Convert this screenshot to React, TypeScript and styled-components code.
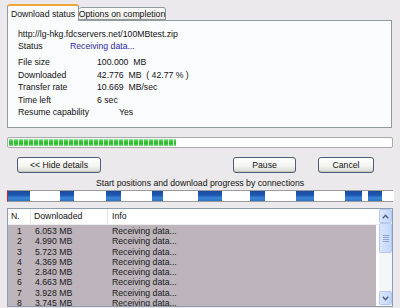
import React from 'react';
import styled, { createGlobalStyle } from 'styled-components';

const Global = createGlobalStyle`
  html, body { margin: 0; padding: 0; background: #ebe9eb; }
  body { font-family: "Liberation Sans", Arial, sans-serif; font-size: 8.7px; color: #111; }
  * { box-sizing: border-box; }
`;

const Window = styled.div`
  width: 400px;
  height: 308px;
  overflow: hidden;
  background: #ebe9eb;
  display: flex;
  flex-direction: column;
  padding: 4px 7px 1px 7px;
`;

const TabStrip = styled.div`
  display: flex;
  align-items: flex-end;
  height: 17px;
  margin-bottom: -1px;
  position: relative;
  z-index: 1;
`;

const Tab = styled.div<{ $active?: boolean }>`
  display: flex;
  align-items: center;
  justify-content: center;
  width: ${(p) => (p.$active ? 72 : 87)}px;
  height: ${(p) => (p.$active ? 17 : 13)}px;
  margin-bottom: ${(p) => (p.$active ? 0 : 1)}px;
  border: 1px solid #919b9c;
  border-bottom: ${(p) => (p.$active ? 'none' : '1px solid #919b9c')};
  border-left: ${(p) => (p.$active ? '1px solid #919b9c' : 'none')};
  border-top: ${(p) => (p.$active ? '2px solid #f0a73a' : '1px solid #919b9c')};
  border-radius: 3px 3px 0 0;
  background: ${(p) => (p.$active ? '#fbfcfe' : 'linear-gradient(#ffffff, #ecebe6)')};
  padding-top: ${(p) => (p.$active ? 0 : 1)}px;
  color: #111;
  white-space: nowrap;
`;

const Panel = styled.div`
  height: 108px;
  margin-right: 1px;
  border: 1px solid #919b9c;
  background: #fbfcfe;
  padding: 7px 10px 0 10px;
  display: flex;
  flex-direction: column;
`;

const UrlLine = styled.div`
  height: 12px;
  line-height: 12px;
`;

const InfoRow = styled.div<{ $gap?: number }>`
  display: grid;
  grid-template-columns: ${(p) => (p.$gap ? `${p.$gap}px` : '79px')} 1fr;
  height: 12.4px;
  line-height: 12px;
`;

const StatusValue = styled.span`
  color: #2b2ba0;
`;

const Spacer = styled.div<{ $h: number }>`
  height: ${(p) => p.$h}px;
  flex: none;
`;

const Progress = styled.div`
  margin-top: 9px;
  height: 11px;
  border: 1px solid #a9a9a9;
  border-radius: 2px;
  background: #fff;
  padding: 1px;
  display: flex;
`;

const ProgressFill = styled.div`
  height: 100%;
  background:
    repeating-linear-gradient(90deg, transparent 0 4px, rgba(255, 255, 255, 0.85) 4px 5px),
    linear-gradient(#9be69a, #37c438 35%, #2fbb2f 65%, #7edc7d);
`;

const ButtonRow = styled.div`
  margin-top: 9px;
  height: 16px;
  display: flex;
  padding-left: 10px;
`;

const Button = styled.div<{ $w: number; $ml?: number }>`
  width: ${(p) => p.$w}px;
  margin-left: ${(p) => p.$ml ?? 0}px;
  height: 16px;
  border: 1px solid #4f5d77;
  border-radius: 3px;
  background: linear-gradient(#ffffff, #f3f3ef 60%, #d8d8d0);
  box-shadow: inset 0 -1px 0 #c9c9c0;
  display: flex;
  align-items: center;
  justify-content: center;
  color: #111;
`;

const Caption = styled.div`
  margin-top: 5px;
  height: 10px;
  line-height: 10px;
  text-align: center;
`;

const ConnBar = styled.div`
  margin-top: 2px;
  height: 12px;
  border: 1px solid #9c9c9c;
  border-left: 1px solid #d42020;
  background: #fff;
  display: flex;
`;

const Seg = styled.div<{ $on: boolean }>`
  height: 100%;
  flex: none;
  background: ${(p) =>
    p.$on ? 'linear-gradient(#1b4a9c, #1d55b2 40%, #3b86d6 70%, #2f70c4)' : '#ffffff'};
`;

const Table = styled.div`
  margin-top: 6px;
  flex: 1;
  border: 1px solid #8c9cb3;
  background: #fff;
  display: flex;
  overflow: hidden;
`;

const List = styled.div`
  flex: 1;
  display: flex;
  flex-direction: column;
  padding-right: 3px;
`;

const cols = '23px 77px 1fr';

const Header = styled.div`
  display: grid;
  grid-template-columns: ${cols};
  height: 16px;
  background: #fff;
  border-bottom: 1px solid #eeeeee;
  margin-right: -3px;
`;

const HeadCell = styled.div<{ $last?: boolean }>`
  padding-left: ${(p) => (p.$last ? 4 : 3)}px;
  line-height: 15px;
  border-right: ${(p) => (p.$last ? 'none' : '1px solid #e4e4e4')};
  color: #111;
`;

const Rows = styled.div`
  flex: 1;
  background: #bdb5bb;
  padding-top: 1px;
`;

const Row = styled.div`
  display: grid;
  grid-template-columns: ${cols};
  height: 10.3px;
  line-height: 10.3px;
  color: #1a1a1a;
`;

const Cell = styled.div<{ $center?: boolean }>`
  padding-left: ${(p) => (p.$center ? 0 : 4)}px;
  text-align: ${(p) => (p.$center ? 'center' : 'left')};
  white-space: nowrap;
  overflow: hidden;
`;

const ScrollBar = styled.div`
  width: 13px;
  display: flex;
  flex-direction: column;
  background: #f5f6f8;
  padding-bottom: 1px;
`;

const ScrollBtn = styled.div`
  height: 14px;
  border: 1px solid #b5c8f0;
  border-radius: 2px;
  background: linear-gradient(90deg, #dce7fd, #c3d5fb);
  display: flex;
  align-items: center;
  justify-content: center;
`;

const Thumb = styled.div`
  height: 30px;
  border: 1px solid #b5c8f0;
  border-radius: 2px;
  background: linear-gradient(90deg, #dbe6fd, #c4d6fb);
  display: flex;
  flex-direction: column;
  align-items: center;
  justify-content: center;
  gap: 1px;
`;

const Grip = styled.div`
  width: 6px;
  height: 1px;
  background: #8ca6db;
`;

const Track = styled.div`
  flex: 1;
`;

const Chevron = ({ up }: { up?: boolean }) => (
  <svg width="7" height="5" viewBox="0 0 7 5">
    <path
      d={up ? 'M0.8 4.2 L3.5 1.3 L6.2 4.2' : 'M0.8 0.8 L3.5 3.7 L6.2 0.8'}
      fill="none"
      stroke="#4d6185"
      strokeWidth="1.5"
    />
  </svg>
);

const segments: [boolean, number][] = [
  [true, 22], [false, 30], [true, 14], [false, 32], [true, 15], [false, 31],
  [true, 11], [false, 35], [true, 24], [false, 28], [true, 15], [false, 31],
  [true, 18], [false, 31], [true, 17], [false, 6], [true, 14], [false, 12],
];

const rows = [
  ['1', '6.053  MB'],
  ['2', '4.990  MB'],
  ['3', '5.723  MB'],
  ['4', '4.369  MB'],
  ['5', '2.840  MB'],
  ['6', '4.663  MB'],
  ['7', '3.928  MB'],
  ['8', '3.745  MB'],
];

export default function App() {
  const progress = 0.436;
  return (
    <>
      <Global />
      <Window>
        <TabStrip>
          <Tab $active>Download status</Tab>
          <Tab>Options on completion</Tab>
        </TabStrip>
        <Panel>
          <UrlLine>http://lg-hkg.fdcservers.net/100MBtest.zip</UrlLine>
          <InfoRow $gap={52}>
            <span>Status</span>
            <StatusValue>Receiving data...</StatusValue>
          </InfoRow>
          <Spacer $h={4} />
          <InfoRow>
            <span>File size</span>
            <span>100.000&nbsp; MB</span>
          </InfoRow>
          <InfoRow>
            <span>Downloaded</span>
            <span>42.776&nbsp; MB&nbsp; ( 42.77 % )</span>
          </InfoRow>
          <InfoRow>
            <span>Transfer rate</span>
            <span>10.669&nbsp; MB/sec</span>
          </InfoRow>
          <InfoRow>
            <span>Time left</span>
            <span>6 sec</span>
          </InfoRow>
          <InfoRow $gap={101}>
            <span>Resume capability</span>
            <span>Yes</span>
          </InfoRow>
        </Panel>
        <Progress>
          <ProgressFill style={{ width: `${progress * 100}%` }} />
        </Progress>
        <ButtonRow>
          <Button $w={84}>&lt;&lt; Hide details</Button>
          <Button $w={63} $ml={132}>Pause</Button>
          <Button $w={56} $ml={22}>Cancel</Button>
        </ButtonRow>
        <Caption>Start positions and download progress by connections</Caption>
        <ConnBar>
          {segments.map(([on, w], i) => (
            <Seg key={i} $on={on} style={{ width: w }} />
          ))}
        </ConnBar>
        <Table>
          <List>
            <Header>
              <HeadCell>N.</HeadCell>
              <HeadCell>Downloaded</HeadCell>
              <HeadCell $last>Info</HeadCell>
            </Header>
            <Rows>
              {rows.map(([n, d]) => (
                <Row key={n}>
                  <Cell $center>{n}</Cell>
                  <Cell>{d}</Cell>
                  <Cell>Receiving data...</Cell>
                </Row>
              ))}
            </Rows>
          </List>
          <ScrollBar>
            <ScrollBtn>
              <Chevron up />
            </ScrollBtn>
            <Thumb>
              <Grip />
              <Grip />
              <Grip />
              <Grip />
            </Thumb>
            <Track />
            <ScrollBtn>
              <Chevron />
            </ScrollBtn>
          </ScrollBar>
        </Table>
      </Window>
    </>
  );
}
